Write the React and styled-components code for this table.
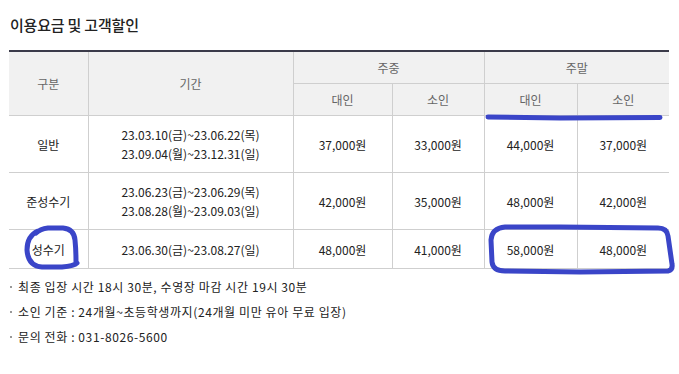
import React from 'react'
import styled, { createGlobalStyle } from 'styled-components'

const GlobalStyle = createGlobalStyle`
  html, body {
    margin: 0;
    padding: 0;
    background: #fff;
  }
  body {
    font-family: "Noto Sans CJK KR", "Noto Sans", sans-serif;
    color: #222;
  }
`

const rows = [
  { type: '일반', dates: ['23.03.10(금)~23.06.22(목)', '23.09.04(월)~23.12.31(일)'], prices: ['37,000원', '33,000원', '44,000원', '37,000원'], height: 57 },
  { type: '준성수기', dates: ['23.06.23(금)~23.06.29(목)', '23.08.28(월)~23.09.03(일)'], prices: ['42,000원', '35,000원', '48,000원', '42,000원'], height: 57 },
  { type: '성수기', dates: ['23.06.30(금)~23.08.27(일)'], prices: ['48,000원', '41,000원', '58,000원', '48,000원'], height: 39 },
]

const notes = [
  '최종 입장 시간 18시 30분, 수영장 마감 시간 19시 30분',
  '소인 기준 : 24개월~초등학생까지(24개월 미만 유아 무료 입장)',
  '문의 전화 : 031-8026-5600',
]

const Page = styled.div`
  position: relative;
  width: 679px;
  height: 374px;
  padding: 15px 10px 0 9px;
  box-sizing: border-box;
`

const Title = styled.h2`
  margin: 0 0 15px 1px;
  font-size: 15px;
  font-weight: 500;
  line-height: 20px;
  color: #222;
  letter-spacing: -0.2px;
`

const Table = styled.table`
  width: 660px;
  border-collapse: collapse;
  table-layout: fixed;
  border-top: 2px solid #3b3b4a;
  font-size: 12px;
`

const HeadCell = styled.th`
  background: #f1f1f1;
  color: #666;
  font-weight: 400;
  height: ${p => p.h}px;
  padding: 0;
  text-align: center;
  border-bottom: 1px solid #cfcfcf;
  border-left: ${p => (p.first ? 'none' : '1px solid #cfcfcf')};
`

const Cell = styled.td`
  color: #222;
  padding: 0;
  text-align: center;
  line-height: 19px;
  height: ${p => p.h}px;
  border-bottom: 1px solid #cfcfcf;
  border-left: ${p => (p.first ? 'none' : '1px solid #cfcfcf')};
`

const Notes = styled.ul`
  list-style: none;
  margin: 5px 0 0 1px;
  padding: 0;
  font-size: 12px;
  letter-spacing: 0.6px;
  color: #222;
`

const Note = styled.li`
  display: flex;
  align-items: center;
  gap: 6px;
  height: 25px;
  &::before {
    content: '';
    width: 2px;
    height: 2px;
    background: #999;
    margin-top: 1px;
  }
`

const Marks = styled.svg`
  position: absolute;
  left: 0;
  top: 0;
  pointer-events: none;
`

export default function App() {
  return (
    <Page>
      <GlobalStyle />
      <Title>이용요금 및 고객할인</Title>
      <Table>
        <colgroup>
          <col style={{ width: 79 }} />
          <col style={{ width: 205 }} />
          <col style={{ width: 99 }} />
          <col style={{ width: 92 }} />
          <col style={{ width: 93 }} />
          <col style={{ width: 92 }} />
        </colgroup>
        <thead>
          <tr>
            <HeadCell first rowSpan={2} h={31}>구분</HeadCell>
            <HeadCell rowSpan={2} h={31}>기간</HeadCell>
            <HeadCell colSpan={2} h={31}>주중</HeadCell>
            <HeadCell colSpan={2} h={31}>주말</HeadCell>
          </tr>
          <tr>
            <HeadCell h={31}>대인</HeadCell>
            <HeadCell h={31}>소인</HeadCell>
            <HeadCell h={31}>대인</HeadCell>
            <HeadCell h={31}>소인</HeadCell>
          </tr>
        </thead>
        <tbody>
          {rows.map(r => (
            <tr key={r.type}>
              <Cell first h={r.height - 1}>{r.type}</Cell>
              <Cell h={r.height - 1}>
                {r.dates.map(d => <div key={d}>{d}</div>)}
              </Cell>
              {r.prices.map((p, i) => <Cell key={i} h={r.height - 1}>{p}</Cell>)}
            </tr>
          ))}
        </tbody>
      </Table>
      <Notes>
        {notes.map(n => <Note key={n}>{n}</Note>)}
      </Notes>
      <Marks width="679" height="374" viewBox="0 0 679 374">
        <g fill="none" stroke="#3a45c8" strokeWidth="5" strokeLinecap="round" strokeLinejoin="round">
          <path d="M488 117 L560 118 L660 117.5" />
          <path d="M505 227 Q492 228 491 240 L492 262 Q493 271 505 271 L580 272 L668 271 Q673 270 672 264 L668 236 Q667 228 658 228 L560 227 Z" />
          <path d="M38 231 Q27 236 27 250 Q28 266 42 267 L62 267 Q74 266 77 263 M76 262 Q76 250 75 240 Q74 229 63 228 L48 228 Q40 229 36 233" />
        </g>
      </Marks>
    </Page>
  )
}
